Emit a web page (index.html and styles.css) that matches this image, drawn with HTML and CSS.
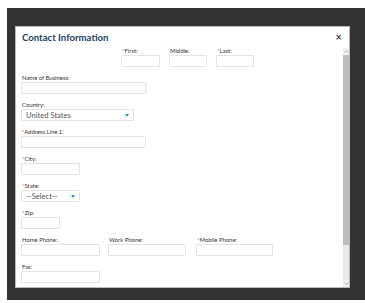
FILE: index.html
```html
<!DOCTYPE html>
<html lang="en">
<head>
<meta charset="utf-8">
<title>Contact Information</title>
<link rel="stylesheet" href="styles.css">
</head>
<body>
<div class="backdrop">
  <div class="modal">
    <div class="modal-header">
      <h2 class="title">Contact Information</h2>
      <span class="close">×</span>
    </div>
    <div class="modal-body">
      <div class="form">
        <div class="row names">
          <div class="field w39"><span class="label"><span class="req">*</span>First:</span><span class="input"></span></div>
          <div class="field w38"><span class="label">Middle:</span><span class="input"></span></div>
          <div class="field w38"><span class="label"><span class="req">*</span>Last:</span><span class="input"></span></div>
        </div>
        <div class="field w125"><span class="label">Name of Business:</span><span class="input"></span></div>
        <div class="field w113"><span class="label">Country:</span><span class="input select"><span class="value">United States</span><span class="caret"></span></span></div>
        <div class="field w125"><span class="label"><span class="req">*</span>Address Line 1:</span><span class="input"></span></div>
        <div class="field w59"><span class="label"><span class="req">*</span>City:</span><span class="input"></span></div>
        <div class="field w59"><span class="label"><span class="req">*</span>State:</span><span class="input select"><span class="value">--Select--</span><span class="caret"></span></span></div>
        <div class="field w39"><span class="label"><span class="req">*</span>Zip:</span><span class="input"></span></div>
        <div class="row phones">
          <div class="field w79"><span class="label">Home Phone:</span><span class="input"></span></div>
          <div class="field w78"><span class="label">Work Phone:</span><span class="input"></span></div>
          <div class="field w77"><span class="label"><span class="req">*</span>Mobile Phone:</span><span class="input"></span></div>
        </div>
        <div class="field w79"><span class="label">Fax:</span><span class="input"></span></div>
      </div>
      <div class="scrollbar">
        <span class="arrow"><svg width="5" height="3" viewBox="0 0 5 3"><polyline points="0.5,2.5 2.5,0.5 4.5,2.5" fill="none" stroke="#9a9a9a" stroke-width="0.8"/></svg></span>
        <span class="thumb"></span>
        <span class="track"></span>
        <span class="arrow"><svg width="5" height="3" viewBox="0 0 5 3"><polyline points="0.5,0.5 2.5,2.5 4.5,0.5" fill="none" stroke="#9a9a9a" stroke-width="0.8"/></svg></span>
      </div>
    </div>
  </div>
</div>
</body>
</html>
```

FILE: styles.css
```css
html, body {
  margin: 0;
  padding: 0;
  background: #ffffff;
}
body {
  padding: 8px 0 0 7px;
  font-family: Lato, "Noto Sans", sans-serif;
}
.backdrop {
  background: #333333;
  height: 292px;
  box-sizing: border-box;
  padding: 18px 0 0 8px;
}
.modal {
  width: 335px;
  height: 262px;
  box-sizing: border-box;
  background: #ffffff;
  border: 1px solid #b9b9b9;
  display: flex;
  flex-direction: column;
}
.modal-header {
  height: 20px;
  flex: none;
  display: flex;
  align-items: flex-start;
  justify-content: space-between;
  padding: 4px 7px 0 6px;
  box-sizing: border-box;
}
.title {
  margin: 0;
  font-size: 9.6px;
  line-height: 13px;
  font-weight: 700;
  color: #213f6b;
}
.close {
  font-family: "DejaVu Sans", sans-serif;
  font-weight: 700;
  font-size: 8px;
  line-height: 8px;
  color: #3a3a3a;
  margin-top: 3px;
}
.modal-body {
  flex: 1;
  display: flex;
  overflow: hidden;
}
.form {
  flex: 1;
  padding-left: 5px;
  display: flex;
  flex-direction: column;
  gap: 7px;
}
.row {
  display: flex;
}
.names {
  padding-left: 100px;
  gap: 9px;
}
.phones {
  gap: 8px;
}
.phones .field + .field + .field {
  margin-left: 2px;
}
.field {
  display: flex;
  flex-direction: column;
}
.label {
  font-size: 5.9px;
  line-height: 8px;
  height: 8px;
  color: #333333;
  padding-left: 1px;
  white-space: nowrap;
}
.req {
  color: #e8602c;
}
.input {
  height: 12px;
  box-sizing: border-box;
  border: 1px solid #e4e4e4;
  border-radius: 1px;
  background: #ffffff;
}
.select {
  display: flex;
  align-items: center;
  justify-content: space-between;
  padding: 0 4px 0 4px;
}
.value {
  font-size: 7.6px;
  line-height: 10px;
  color: #555555;
  white-space: nowrap;
}
.caret {
  width: 0;
  height: 0;
  border-left: 2.5px solid transparent;
  border-right: 2.5px solid transparent;
  border-top: 3px solid #1f9ad8;
  margin-top: 1px;
}
.w39 { width: 39px; }
.w38 { width: 38px; }
.w59 { width: 59px; }
.w77 { width: 77px; }
.w78 { width: 78px; }
.w79 { width: 79px; }
.w113 { width: 113px; }
.w125 { width: 125px; }
.scrollbar {
  width: 6px;
  flex: none;
  display: flex;
  flex-direction: column;
  background: #e9e9e9;
  margin-top: 1px;
}
.arrow {
  height: 7px;
  flex: none;
  display: flex;
  align-items: center;
  justify-content: center;
  background: #f1f1f1;
}
.thumb {
  height: 190px;
  flex: none;
  background: #bdbdbd;
}
.track {
  flex: 1;
}
```
